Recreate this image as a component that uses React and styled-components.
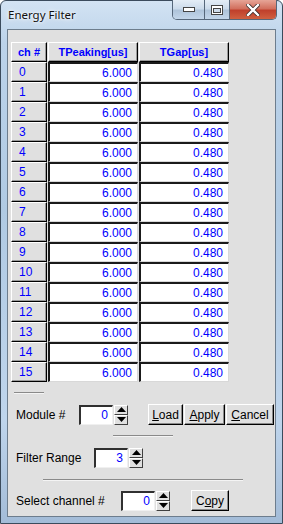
import styled, { createGlobalStyle } from "styled-components";

const Global = createGlobalStyle`
  html, body { margin: 0; padding: 0; background: #ffffff; }
  body { width: 283px; height: 524px; overflow: hidden; }
`;

const Window = styled.div`
  box-sizing: border-box;
  width: 283px;
  height: 524px;
  border: 1px solid #3b4b5c;
  border-radius: 6px 6px 0 0;
  background: linear-gradient(180deg, #d3e3f3 0%, #bcd3ea 8%, #b0cae3 40%, #bfd5ec 80%, #a3bcd8 100%);
  display: flex;
  flex-direction: column;
  padding: 0 6px 6px 6px;
  font-family: "Liberation Sans", Arial, sans-serif;
`;

const TitleBar = styled.div`
  height: 28px;
  flex: none;
  display: flex;
  align-items: flex-start;
  justify-content: space-between;
`;

const Title = styled.div`
  font-family: "Noto Sans", sans-serif;
  font-size: 11.5px;
  color: #111;
  margin: 6px 0 0 1px;
  text-shadow: 0 0 6px #ffffff, 0 0 3px #ffffff;
`;

const Caption = styled.div`
  display: flex;
  margin-top: -1px;
  margin-right: -1px;
  border: 1px solid #56677a;
  border-top: none;
  border-radius: 0 0 5px 5px;
  overflow: hidden;
  height: 19px;
`;

const CapBtn = styled.div`
  width: ${(p) => p.$w}px;
  display: flex;
  align-items: center;
  justify-content: center;
  border-left: ${(p) => (p.$first ? "none" : "1px solid #56677a")};
  background: ${(p) =>
    p.$close
      ? "linear-gradient(180deg, #e6a597 0%, #d2705e 45%, #c0402c 55%, #d06040 100%)"
      : "linear-gradient(180deg, #e4edf6 0%, #ccdbeb 45%, #afc4da 55%, #c3d6ea 100%)"};
`;

const Client = styled.div`
  flex: 1;
  background: #e0e0e0;
  border: 1px solid #6d7d8d;
  padding: 12px 0 0 3px;
  display: flex;
  flex-direction: column;
`;

const Grid = styled.div`
  display: grid;
  grid-template-columns: 36px 90px 90px;
  grid-auto-rows: 20px;
  column-gap: 1px;
`;

const HeadCell = styled.div`
  box-sizing: border-box;
  background: #e0e0e0;
  border-top: 1px solid #ffffff;
  border-left: 1px solid #ffffff;
  border-right: 1px solid #000000;
  border-bottom: 1px solid #000000;
  box-shadow: inset -1px -1px 0 #9a9a9a;
  color: #0000ff;
  font-size: ${(p) => (p.$bold ? "11px" : "12px")};
  font-weight: ${(p) => (p.$bold ? "bold" : "normal")};
  display: flex;
  align-items: center;
  justify-content: ${(p) => (p.$bold ? "center" : "flex-start")};
  padding-left: ${(p) => (p.$bold ? "0" : "7px")};
`;

const ValueCell = styled.div`
  box-sizing: border-box;
  background: #ffffff;
  border-top: 2px solid #1a1a1a;
  border-left: 2px solid #1a1a1a;
  border-right: 1px solid #d8d8d8;
  border-bottom: 1px solid #d8d8d8;
  color: #0000ff;
  font-size: 12px;
  display: flex;
  align-items: center;
  justify-content: flex-end;
  padding-right: 5px;
`;

const Sep = styled.div`
  width: ${(p) => p.$w}px;
  height: 1px;
  background: #8a8a8a;
  border-bottom: 1px solid #f4f4f4;
  align-self: ${(p) => (p.$center ? "center" : "flex-start")};
  margin: ${(p) => p.$m};
`;

const Row = styled.div`
  display: flex;
  align-items: center;
  height: 21px;
  margin: ${(p) => p.$m};
`;

const Label = styled.div`
  box-sizing: border-box;
  width: ${(p) => p.$w}px;
  font-size: 12px;
  color: #000;
  padding-left: 5px;
  flex: none;
`;

const SpinInput = styled.div`
  box-sizing: border-box;
  width: 34px;
  height: 20px;
  background: #ffffff;
  border-top: 2px solid #303030;
  border-left: 2px solid #303030;
  border-right: 1px solid #f0f0f0;
  border-bottom: 1px solid #f0f0f0;
  color: #0000ff;
  font-size: 12px;
  display: flex;
  align-items: center;
  justify-content: flex-end;
  padding-right: 4px;
`;

const Arrows = styled.div`
  display: flex;
  flex-direction: column;
  width: 14px;
  height: 20px;
  margin-left: 1px;
`;

const ArrowBtn = styled.div`
  box-sizing: border-box;
  flex: 1;
  background: #e0e0e0;
  border-top: 1px solid #ffffff;
  border-left: 1px solid #ffffff;
  border-right: 1px solid #404040;
  border-bottom: 1px solid #404040;
  display: flex;
  align-items: center;
  justify-content: center;
`;

const Button = styled.div`
  box-sizing: border-box;
  height: 21px;
  width: ${(p) => p.$w}px;
  margin-left: ${(p) => p.$ml || 0}px;
  background: #e0e0e0;
  border-top: 1px solid #ffffff;
  border-left: 1px solid #ffffff;
  border-right: 1px solid #000000;
  border-bottom: 1px solid #000000;
  box-shadow: inset -1px -1px 0 #8a8a8a;
  font-size: 12px;
  color: #000;
  display: flex;
  align-items: center;
  justify-content: center;
  u { text-decoration: underline; }
`;

const Up = () => (
  <svg width="9" height="5" viewBox="0 0 9 5"><path d="M0 5 L4.5 0 L9 5 Z" fill="#000" /></svg>
);
const Down = () => (
  <svg width="9" height="5" viewBox="0 0 9 5"><path d="M0 0 L4.5 5 L9 0 Z" fill="#000" /></svg>
);

const Spinner = ({ value }) => (
  <>
    <SpinInput>{value}</SpinInput>
    <Arrows>
      <ArrowBtn><Up /></ArrowBtn>
      <ArrowBtn><Down /></ArrowBtn>
    </Arrows>
  </>
);

const channels = Array.from({ length: 16 }, (_, i) => i);

export default function App() {
  return (
    <>
      <Global />
      <Window>
        <TitleBar>
          <Title>Energy Filter</Title>
          <Caption>
            <CapBtn $w={31} $first>
              <svg width="12" height="5"><rect x="0.5" y="0.5" width="11" height="4" fill="#fff" stroke="#444" /></svg>
            </CapBtn>
            <CapBtn $w={24}>
              <svg width="12" height="10"><rect x="0.5" y="0.5" width="11" height="9" fill="#fff" stroke="#444" /><rect x="2.5" y="3.5" width="7" height="4" fill="#cfdceb" stroke="#444" /></svg>
            </CapBtn>
            <CapBtn $w={46} $close>
              <svg width="14" height="12" viewBox="0 0 14 12">
                <path d="M2 1 L12 11 M12 1 L2 11" stroke="#3a2a28" strokeWidth="4" strokeLinecap="square" />
                <path d="M2 1 L12 11 M12 1 L2 11" stroke="#ffffff" strokeWidth="2.4" strokeLinecap="square" />
              </svg>
            </CapBtn>
          </Caption>
        </TitleBar>
        <Client>
          <Grid>
            <HeadCell $bold>ch #</HeadCell>
            <HeadCell $bold>TPeaking[us]</HeadCell>
            <HeadCell $bold>TGap[us]</HeadCell>
            {channels.map((ch) => (
              <Cells key={ch} ch={ch} />
            ))}
          </Grid>
          <Sep $w={30} $m="10px 0 0 3px" />
          <Row $m="10px 0 0 0">
            <Label $w={68}>Module #</Label>
            <Spinner value="0" />
            <Button $w={35} $ml={20}><span><u>L</u>oad</span></Button>
            <Button $w={41} $ml={1}><span><u>A</u>pply</span></Button>
            <Button $w={48} $ml={1}><span><u>C</u>ancel</span></Button>
          </Row>
          <Sep $w={60} $center $m="10px 0 0 0" />
          <Row $m="10px 0 0 0">
            <Label $w={83}>Filter Range</Label>
            <Spinner value="3" />
          </Row>
          <Sep $w={200} $center $m="11px 0 0 0" />
          <Row $m="9px 0 0 0">
            <Label $w={110}>Select channel #</Label>
            <Spinner value="0" />
            <Button $w={38} $ml={21}><span>C<u>o</u>py</span></Button>
          </Row>
        </Client>
      </Window>
    </>
  );
}

function Cells({ ch }) {
  return (
    <>
      <HeadCell>{ch}</HeadCell>
      <ValueCell>6.000</ValueCell>
      <ValueCell>0.480</ValueCell>
    </>
  );
}
